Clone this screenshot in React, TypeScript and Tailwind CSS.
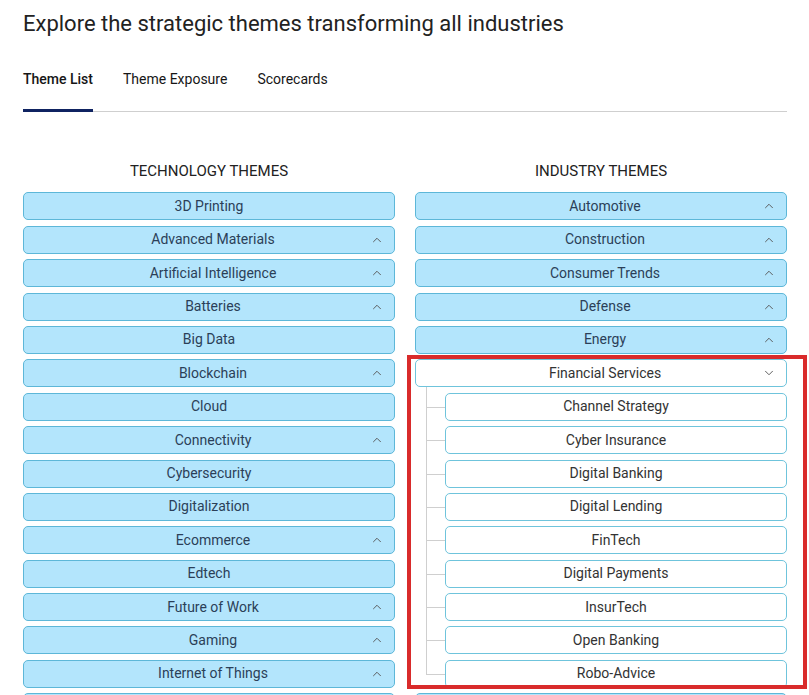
import { ChevronUp, ChevronDown } from 'lucide-react';

type Theme = { name: string; sub?: boolean };

const techThemes: Theme[] = [
  { name: '3D Printing' },
  { name: 'Advanced Materials', sub: true },
  { name: 'Artificial Intelligence', sub: true },
  { name: 'Batteries', sub: true },
  { name: 'Big Data' },
  { name: 'Blockchain', sub: true },
  { name: 'Cloud' },
  { name: 'Connectivity', sub: true },
  { name: 'Cybersecurity' },
  { name: 'Digitalization' },
  { name: 'Ecommerce', sub: true },
  { name: 'Edtech' },
  { name: 'Future of Work', sub: true },
  { name: 'Gaming', sub: true },
  { name: 'Internet of Things', sub: true },
  { name: 'Medtech', sub: true },
];

const industryThemes: Theme[] = [
  { name: 'Automotive', sub: true },
  { name: 'Construction', sub: true },
  { name: 'Consumer Trends', sub: true },
  { name: 'Defense', sub: true },
  { name: 'Energy', sub: true },
];

const financialChildren = [
  'Channel Strategy',
  'Cyber Insurance',
  'Digital Banking',
  'Digital Lending',
  'FinTech',
  'Digital Payments',
  'InsurTech',
  'Open Banking',
  'Robo-Advice',
];

function ThemeButton({ theme }: { theme: Theme }) {
  return (
    <button
      className={`relative flex items-center justify-center h-[28px] w-full shrink-0 rounded-[5px] border border-[#5db7d8] bg-[#b3e5fc] text-[14px] text-[#2b3f58] ${
        theme.sub ? 'pl-[8px]' : ''
      }`}
    >
      {theme.name}
      {theme.sub && (
        <ChevronUp size={14} strokeWidth={1.6} className="absolute right-[10px] text-[#555]" />
      )}
    </button>
  );
}

function ChildButton({ name }: { name: string }) {
  return (
    <div className="relative">
      <span className="absolute left-[-19px] top-1/2 h-px w-[19px] bg-[#cfcfcf]" />
      <button className="flex items-center justify-center h-[28px] w-full rounded-[5px] border border-[#6fc4dc] bg-white text-[14px] text-[#333]">
        {name}
      </button>
    </div>
  );
}

export default function App() {
  return (
    <div
      className="h-[695px] overflow-hidden bg-white pl-[23px] pr-[22px] text-[#222]"
      style={{ fontFamily: 'Roboto, "Noto Sans", sans-serif' }}
    >
      <h1 className="pt-[9px] text-[22px] leading-[30px] font-normal text-[#222]">
        Explore the strategic themes transforming all industries
      </h1>

      <div className="mt-[30px] flex gap-[30px] border-b border-[#cfcfcf] text-[14px]">
        <div className="pb-[19px] -mb-px border-b-[3px] border-[#0f2361] font-medium text-[#161616]">
          Theme List
        </div>
        <div className="pb-[19px] text-[#161616]">Theme Exposure</div>
        <div className="pb-[19px] text-[#161616]">Scorecards</div>
      </div>

      <div className="mt-[49px] grid grid-cols-2 gap-[20px]">
        <div className="flex flex-col gap-[5.4px]">
          <div className="mb-[6px] text-center text-[15px] leading-[20px] text-[#222]">TECHNOLOGY THEMES</div>
          {techThemes.map((t) => (
            <ThemeButton key={t.name} theme={t} />
          ))}
        </div>

        <div className="relative flex flex-col gap-[5.4px]">
          <div className="mb-[6px] text-center text-[15px] leading-[20px] text-[#222]">INDUSTRY THEMES</div>
          {industryThemes.map((t) => (
            <ThemeButton key={t.name} theme={t} />
          ))}

          <button className="relative flex items-center justify-center h-[28px] w-full shrink-0 rounded-[5px] border border-[#6fc4dc] bg-white pl-[8px] text-[14px] text-[#333]">
            Financial Services
            <ChevronDown size={14} strokeWidth={1.6} className="absolute right-[10px] text-[#555]" />
          </button>

          <div className="relative flex flex-col gap-[5.4px] pl-[30px]">
            <span className="absolute left-[11px] top-[-6px] bottom-[14px] w-px bg-[#cfcfcf]" />
            {financialChildren.map((c) => (
              <ChildButton key={c} name={c} />
            ))}
          </div>

          <ThemeButton theme={{ name: 'Healthcare', sub: true }} />

          {/* annotation frame */}
          <div className="pointer-events-none absolute left-[-8px] right-[-20px] top-[194px] h-[334px] border-[4px] border-[#d92b2b]" />
        </div>
      </div>
    </div>
  );
}
